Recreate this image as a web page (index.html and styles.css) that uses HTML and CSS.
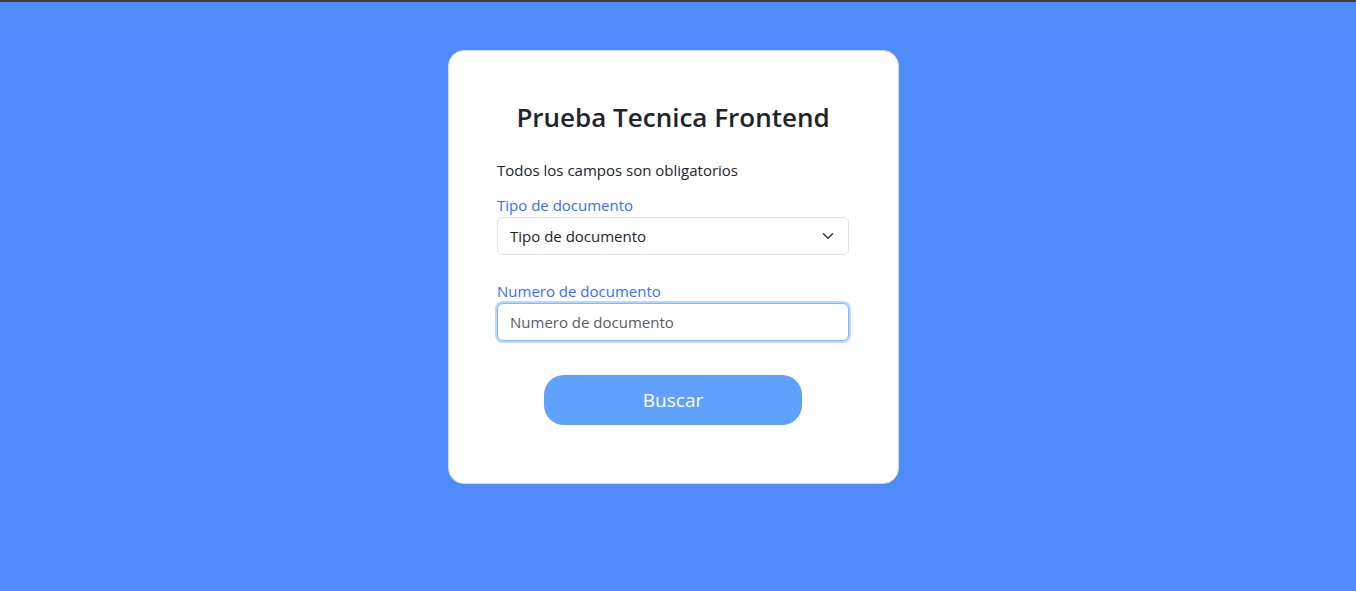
FILE: index.html
```html
<!DOCTYPE html>
<html lang="es">
<head>
<meta charset="utf-8">
<title>Prueba Tecnica Frontend</title>
<link rel="stylesheet" href="styles.css">
</head>
<body>
<main class="page">
  <section class="card">
    <h2 class="title">Prueba Tecnica Frontend</h2>
    <p class="note">Todos los campos son obligatorios</p>
    <form class="form">
      <div class="field">
        <label class="label" for="tipo">Tipo de documento</label>
        <div class="select-wrap">
          <select id="tipo" class="control select">
            <option>Tipo de documento</option>
          </select>
          <svg class="chevron" width="12" height="8" viewBox="0 0 12 8" aria-hidden="true"><path d="M1.5 1.8L6 6.2l4.5-4.4" fill="none" stroke="#343a40" stroke-width="1.6" stroke-linecap="round" stroke-linejoin="round"/></svg>
        </div>
      </div>
      <div class="field">
        <label class="label" for="numero">Numero de documento</label>
        <input id="numero" class="control input focus" type="text" placeholder="Numero de documento">
      </div>
      <div class="actions">
        <button type="button" class="btn">Buscar</button>
      </div>
    </form>
  </section>
</main>
</body>
</html>
```

FILE: styles.css
```css
html, body {
  margin: 0;
  padding: 0;
}
body {
  background: #4f8bfb;
  border-top: 2px solid #3c3c3c;
  min-height: 589px;
  font-family: "Open Sans", "Noto Sans", sans-serif;
  color: #212529;
}
.page {
  display: flex;
  justify-content: center;
  padding: 48px 9px 0 0;
}
.card {
  box-sizing: border-box;
  width: 451px;
  background: #fff;
  border: 1px solid #d6d9de;
  border-radius: 16px;
  padding: 49px 49px 58px 48px;
}
.title {
  margin: 0;
  text-align: center;
  font-size: 26px;
  font-weight: 600;
  line-height: 34px;
  color: #212529;
}
.note {
  margin: 25px 0 0;
  font-size: 15px;
  line-height: 22px;
}
.form {
  display: flex;
  flex-direction: column;
  margin-top: 14px;
}
.field {
  display: flex;
  flex-direction: column;
}
.field + .field {
  margin-top: 26px;
}
.label {
  font-size: 15px;
  line-height: 20px;
  color: #3b6cf8;
  margin-bottom: 2px;
}
.select-wrap {
  position: relative;
}
.control {
  box-sizing: border-box;
  width: 100%;
  height: 38px;
  border: 1px solid #dee2e6;
  border-radius: 6px;
  background: #fff;
  font-family: inherit;
  font-size: 15px;
  color: #212529;
  padding: 0 12px;
  outline: none;
}
.select {
  appearance: none;
  -webkit-appearance: none;
}
.chevron {
  position: absolute;
  right: 15px;
  top: 15px;
  width: 12px;
  height: 8px;
  pointer-events: none;
}
.input::placeholder {
  color: #595c5f;
}
.input.focus {
  border-color: #86b7fe;
  box-shadow: 0 0 0 2px #bcd6fd;
}
.actions {
  display: flex;
  justify-content: center;
  margin-top: 34px;
}
.btn {
  width: 258px;
  height: 50px;
  border: none;
  border-radius: 20px;
  background: #60a1fd;
  color: #fff;
  font-family: inherit;
  font-size: 19px;
  font-weight: 500;
  cursor: pointer;
}
```
